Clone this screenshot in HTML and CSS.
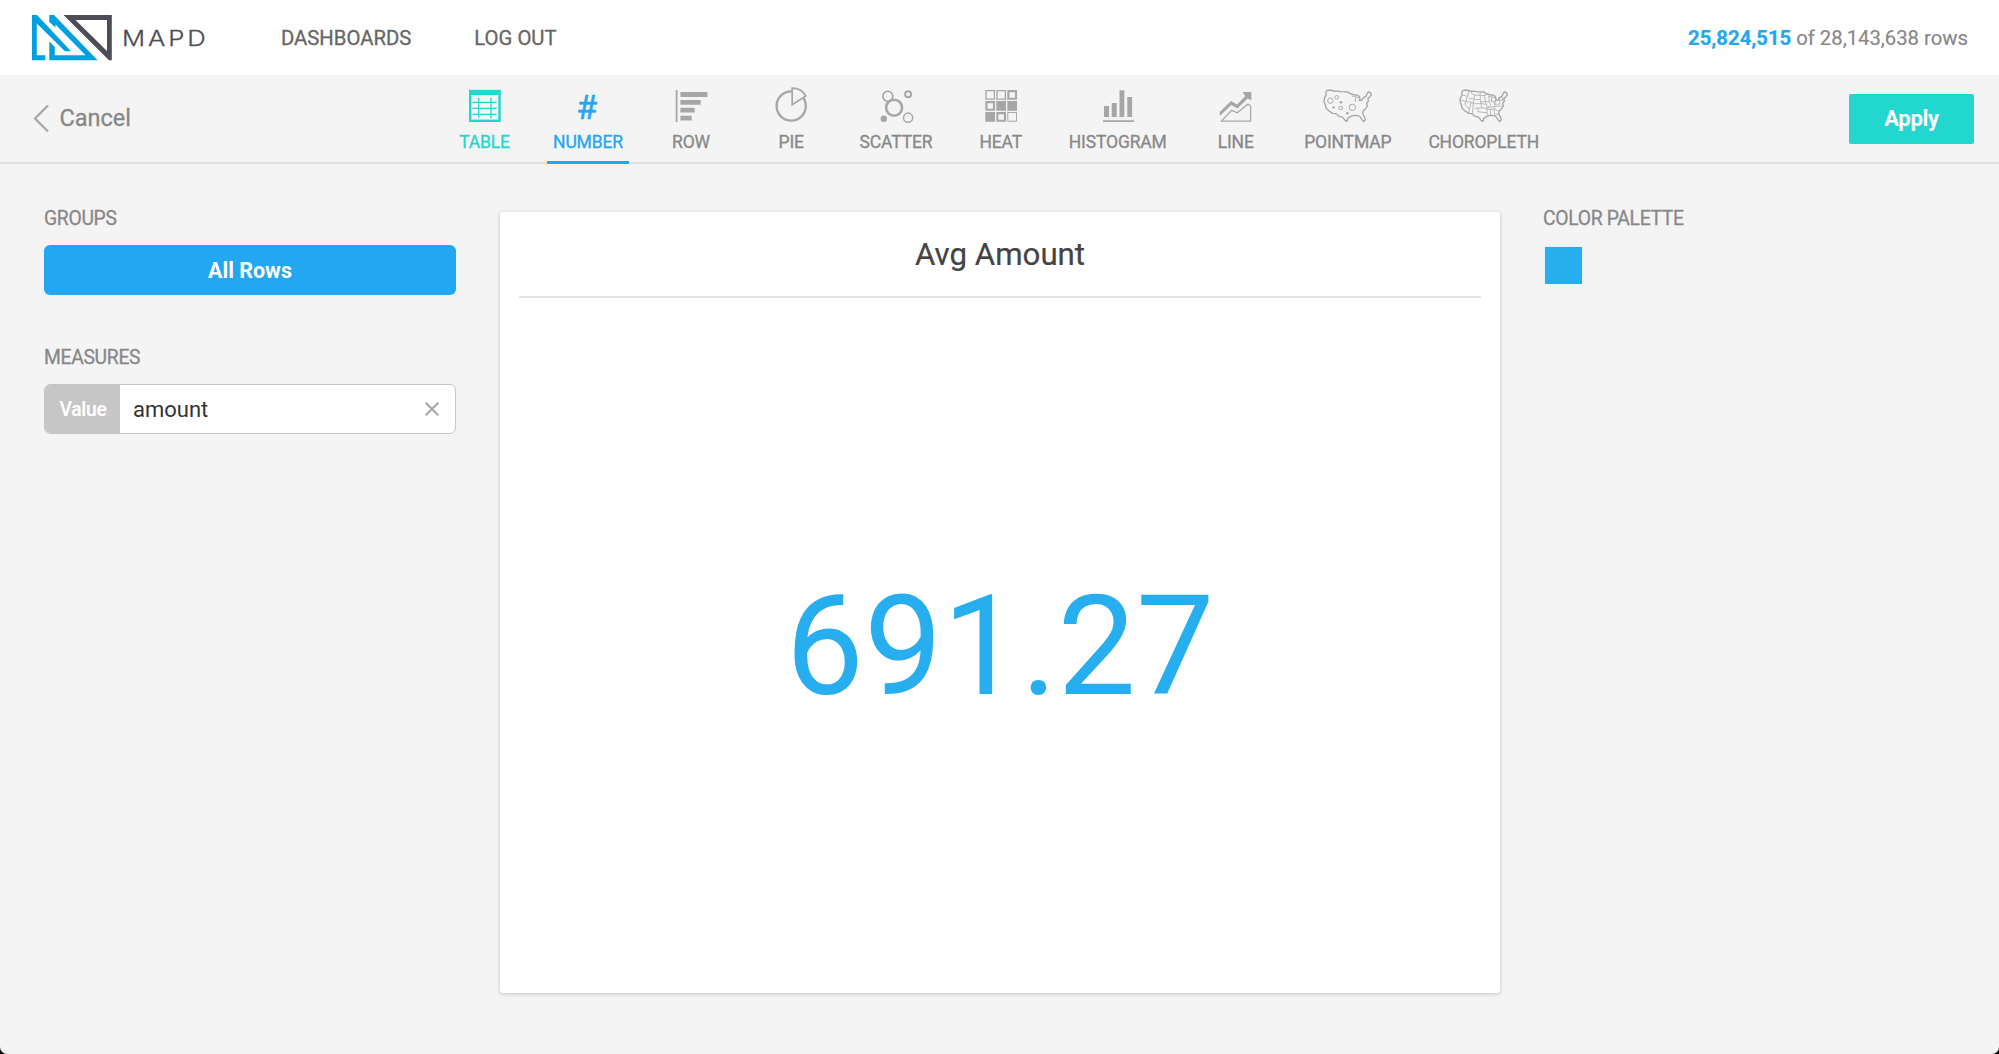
FILE: index.html
```html
<!DOCTYPE html>
<html lang="en">
<head>
<meta charset="utf-8">
<title>MapD</title>
<link rel="stylesheet" href="styles.css">
</head>
<body>
<div class="app">
  <header class="header">
    <svg class="logo" width="182" height="50" viewBox="30 12 182 50" role="img" aria-label="MapD">
      <path class="logo-blue" d="M32 15H37L71 51.3H65L36.8 23.6V55.3H45.3V60.3H32Z"/>
      <path class="logo-blue" d="M49.3 15H54L97.6 60.3H49.3V41.5L54.8 47V55.3H85.5L55.5 24.5V27.5L49.3 22Z"/>
      <path class="logo-dark" fill-rule="evenodd" d="M63.5 15H111.8V60.3H109ZM75.5 20L107 51V20Z"/>
      <text class="logo-text" x="122" y="45.8" textLength="86.5" lengthAdjust="spacingAndGlyphs">MAPD</text>
    </svg>
    <nav class="nav">
      <a>DASHBOARDS</a>
      <a>LOG OUT</a>
    </nav>
    <div class="count"><b>25,824,515</b> of 28,143,638 rows</div>
  </header>

  <div class="toolbar">
    <a class="cancel">
      <svg width="17" height="29" viewBox="0 0 17 29"><path d="M15 1.5L2 14.5L15 27.5"/></svg>
      <span>Cancel</span>
    </a>
    <div class="tabs">
      <a class="tab done">
        <svg class="icon" viewBox="0 0 52 40">
          <rect x="11.2" y="5" width="29.3" height="29.8" fill="none" stroke="currentColor" stroke-width="2.4"/>
          <path class="solid" d="M10 4H41.7V9H10Z"/>
          <path class="line" stroke-width="1.3" d="M13.4 16.3H37.7M13.4 22.3H37.7M13.4 28.3H37.7M19.7 11.7V32.3M32 11.7V32.3"/>
        </svg>
        <span>TABLE</span>
      </a>
      <a class="tab active">
        <svg class="icon" viewBox="0 0 52 40"><text class="hash" x="24.6" y="32.6">#</text></svg>
        <span>NUMBER</span>
      </a>
      <a class="tab">
        <svg class="icon" viewBox="0 0 52 40">
          <path class="solid" d="M10.7 4h1.8v32h-1.8zM15.4 6h27v5h-27zM15.4 14h20.3v4.7H15.4zM15.4 21.7h14.3v4.7H15.4zM15.4 29.7h11.3v4.7H15.4z"/>
        </svg>
        <span>ROW</span>
      </a>
      <a class="tab">
        <svg class="icon" viewBox="0 0 52 40">
          <circle class="line" cx="26.2" cy="20" r="14.6" stroke-width="2.3"/>
          <path class="line wedge" stroke-width="1.7" d="M27.2 18.6V2.2C33 2.2 38 5 40.8 10Z"/>
        </svg>
        <span>PIE</span>
      </a>
      <a class="tab">
        <svg class="icon" viewBox="0 0 52 40">
          <circle class="line" cx="17.8" cy="10.3" r="5" stroke-width="1.6"/>
          <circle class="line wedge" cx="24.1" cy="21.7" r="8" stroke-width="2.6"/>
          <circle class="line" cx="38.1" cy="8.3" r="3" stroke-width="1.9"/>
          <circle class="line" cx="38.1" cy="31.7" r="4.6" stroke-width="1.5"/>
          <circle class="solid" cx="13.8" cy="32.7" r="3.2"/>
        </svg>
        <span>SCATTER</span>
      </a>
      <a class="tab">
        <svg class="icon" viewBox="0 0 52 40">
          <path class="line" stroke-width="1.3" d="M11 4.7h8.4v8.4H11zM22 4.7h8.4v8.4H22z"/>
          <path class="line" stroke-width="2.1" d="M33.4 5.1h7.6v7.6h-7.6zM11.4 16.1H19v7.6h-7.6zM22.4 27.1H30v7.6h-7.6z"/>
          <path class="line" stroke-width="1" d="M32.8 26.5h8.7v8.7h-8.7z"/>
          <path class="solid" d="M21.3 15H31v9.7h-9.7zM32.3 15H42v9.7h-9.7zM10.3 26H20v9.7h-9.7z"/>
        </svg>
        <span>HEAT</span>
      </a>
      <a class="tab">
        <svg class="icon" viewBox="0 0 52 40">
          <path class="solid" d="M12 20h5v11h-5zM19.7 17h5v14h-5zM27.5 4.3h4.8V31h-4.8zM35.3 11h4.8v20h-4.8zM11 34.2h31v1.7H11z"/>
        </svg>
        <span>HISTOGRAM</span>
      </a>
      <a class="tab">
        <svg class="icon" viewBox="0 0 52 40">
          <path class="solid" d="M9.8 26L21 15L27 18.6L35.2 10.2L32.6 6H41.3V14.4L37.6 12.4L27.4 22.6L21.3 19L9.8 30Z"/>
          <path class="line" stroke-width="1.3" d="M11.4 35.1L21.7 24.3L27.3 26.8L38 18L40.6 20V35.1Z"/>
        </svg>
        <span>LINE</span>
      </a>
      <a class="tab">
        <svg class="icon" viewBox="126 33 156 120">
          <g id="usa" class="line" stroke-width="4" stroke-linejoin="round">
            <path d="M142 46L150 45L162 48L185 50L205 51L208 55L214 57L220 59L230 60L238 64L240 71L238 77L246 75L250 68L258 64L262 54L267 50L271 53L274 59L270 65L264 70L265 78L260 85L262 93L256 102L249 109L248 117L254 127L256 134L252 140L247 136L241 126L234 122L222 121L212 124L203 130L201 139L195 136L190 129L184 125L177 124L168 116L158 115L147 108L138 99L136 90L132 80L133 70L138 60L138 50L142 46"/>
            <path stroke-width="2.8" d="M216 64L222 63L228 66L226 72L227 80M230 66L237 69"/>
          </g>
          <g class="line" stroke-width="2.8">
            <circle cx="151" cy="77" r="8"/><circle cx="170" cy="67" r="5.5"/>
            <circle cx="182" cy="99" r="5.5"/><circle cx="217" cy="97" r="9.5"/>
          </g>
          <g class="solid">
            <circle cx="183" cy="82" r="4"/><circle cx="161" cy="97" r="3.6"/><circle cx="202" cy="115" r="4"/>
          </g>
        </svg>
        <span>POINTMAP</span>
      </a>
      <a class="tab">
        <svg class="icon" viewBox="126 33 156 120">
          <use href="#usa"/>
          <path class="line" stroke-width="2.2" d="M138 60L156 64L158 48M133 75L150 79L154 64M150 79L146 87L160 103L158 115M150 79L165 82L162 97L160 103M165 48L167 56L176 60L174 71L158 70M176 60L192 61L193 50M174 71L172 84L165 82M172 84L169 117M176 73L193 74V61L208 62M193 74L195 86H173M193 81L208 80L206 66L210 57M195 86L212 88L208 80L220 79L218 66M176 100L197 99L195 86M186 101V110L200 112L213 113L212 88M197 99L212 100M213 104L224 103V121M212 113L217 122M220 79L224 90L214 98L240 94L260 93M226 80L234 79L236 91M238 77L237 88L252 87L250 76L264 74M224 103L234 102L236 118L248 118M234 102L248 108M240 94L232 102M250 68L252 76M258 64L260 76"/>
        </svg>
        <span>CHOROPLETH</span>
      </a>
    </div>
    <button class="apply">Apply</button>
  </div>

  <main class="main">
    <aside class="side">
      <h2>GROUPS</h2>
      <button class="all-rows">All Rows</button>
      <h2 class="measures">MEASURES</h2>
      <div class="field">
        <span class="field-tag">Value</span>
        <span class="field-value">amount</span>
        <svg class="clear" width="14" height="14" viewBox="0 0 14 14"><path d="M.7 .7L13.3 13.3M13.3 .7L.7 13.3"/></svg>
      </div>
    </aside>
    <section class="card">
      <h1>Avg Amount</h1>
      <div class="number">691.27</div>
    </section>
    <aside class="palette">
      <h2>COLOR PALETTE</h2>
      <div class="swatch"></div>
    </aside>
  </main>
</div>
</body>
</html>
```
FILE: styles.css
```css
* { box-sizing: border-box; }

html { background: #000; }

body {
  margin: 0;
  font-family: Roboto, "Liberation Sans", sans-serif;
  color: #888;
}

button { border: 0; padding: 0; font-family: inherit; color: #fff; }

.app {
  display: flex;
  flex-direction: column;
  height: 1054px;
  background: #f4f4f4;
  border-radius: 0 0 7px 7px;
  overflow: hidden;
}

.header {
  display: flex;
  align-items: center;
  height: 75px;
  padding: 0 31px 0 30px;
  background: #fff;
  font-size: 20.3px;
}

.logo { display: block; margin-top: -1px; }
.logo-blue { fill: #00a0e0; }
.logo-dark { fill: #4d4d57; }
.logo-text { font-family: Inter, sans-serif; font-weight: 300; font-size: 21.5px; letter-spacing: 2.4px; fill: #4d4d57; stroke: #4d4d57; stroke-width: .3px; }

.nav { display: flex; gap: 63px; margin-left: 69px; color: #666; -webkit-text-stroke: .3px; }

.count { margin-left: auto; -webkit-text-stroke: .2px; }
.count b { color: #22a7f0; }

.toolbar {
  display: grid;
  grid-template-columns: 434px auto 1fr;
  height: 89px;
  border-bottom: 2px solid #e0e0e0;
}

.cancel {
  display: flex;
  align-items: center;
  gap: 10px;
  height: 86px;
  padding-left: 32.5px;
  font-size: 23.5px;
  -webkit-text-stroke: .3px;
}
.cancel path { fill: none; stroke: #a6a6a6; stroke-width: 2.2; }

.tabs {
  display: grid;
  grid-template-columns: 101px 106px 100px 100.5px 109px 100.5px 133.5px 102.5px 121.5px 150.5px;
  justify-items: center;
  height: 89px;
}

.tab {
  display: flex;
  flex-direction: column;
  align-items: center;
  height: 89px;
  padding: 11px 6.5px 0;
  font-size: 17.5px;
  letter-spacing: -.15px;
  line-height: 21px;
  -webkit-text-stroke: .3px;
}
.tab.done { color: #22d7d0; }
.tab.active { color: #22a7f0; border-bottom: 3px solid #22a7f0; }

.icon { display: block; width: 52px; height: 40px; margin-bottom: 6px; color: #a6a6a6; }
.done .icon, .active .icon { color: inherit; }
.line { fill: none; stroke: currentColor; }
.solid { fill: currentColor; }
.wedge { fill: #f4f4f4; }
.hash { font-size: 34px; font-weight: 400; text-anchor: middle; fill: currentColor; stroke: currentColor; stroke-width: .5px; }

.apply {
  justify-self: end;
  width: 125px;
  height: 50px;
  margin: 18.5px 25px 0 0;
  border-radius: 2px;
  background: #22d7d0;
  font-size: 22px;
  font-weight: 700;
  letter-spacing: -.3px;
}

.main {
  display: grid;
  grid-template-columns: 412px 1000px 1fr;
  column-gap: 44px;
  padding: 43px 44px 0;
}

h2 {
  margin: 0;
  padding-top: 1px;
  font-size: 19.3px;
  font-weight: 400;
  letter-spacing: -.3px;
  line-height: 22px;
  -webkit-text-stroke: .3px;
}

.all-rows {
  display: block;
  width: 100%;
  height: 50px;
  margin-top: 15px;
  border-radius: 6px;
  background: #22a7f0;
  font-size: 21.5px;
  font-weight: 700;
}
.measures { margin-top: 51px; }

.field {
  display: flex;
  align-items: center;
  height: 50px;
  margin-top: 15px;
  padding-right: 16px;
  border: 1px solid #c6c6c6;
  border-radius: 6px;
  background: #fff;
  overflow: hidden;
}
.field-tag {
  width: 75px;
  padding: 2px 0 0 1px;
  background: #c6c6c6;
  color: #fff;
  font-size: 19.3px;
  font-weight: 500;
  letter-spacing: -.3px;
  line-height: 48px;
  text-align: center;
  -webkit-text-stroke: .2px;
}
.field-value { margin-left: 13px; color: #333; font-size: 22px; }
.clear { margin-left: auto; stroke: #a6a6a6; stroke-width: 2; }

.card {
  height: 781px;
  margin-top: 5px;
  padding: 0 19px;
  border-radius: 3px;
  background: #fff;
  box-shadow: 0 1px 4px rgba(0, 0, 0, .2);
}
.card h1 {
  margin: 0;
  height: 86px;
  border-bottom: 2px solid #e2e2e2;
  color: #444;
  font-size: 31.25px;
  font-weight: 400;
  line-height: 86px;
  text-align: center;
  -webkit-text-stroke: .2px;
}
.number {
  color: #27aeef;
  font-size: 139.5px;
  line-height: 697px;
  text-align: center;
}

.palette { margin-left: -1px; }

.swatch {
  width: 39px;
  height: 39px;
  margin: 16px 0 0 1px;
  border: 1px solid #e3f4fd;
  background: #27aeef;
}
```
